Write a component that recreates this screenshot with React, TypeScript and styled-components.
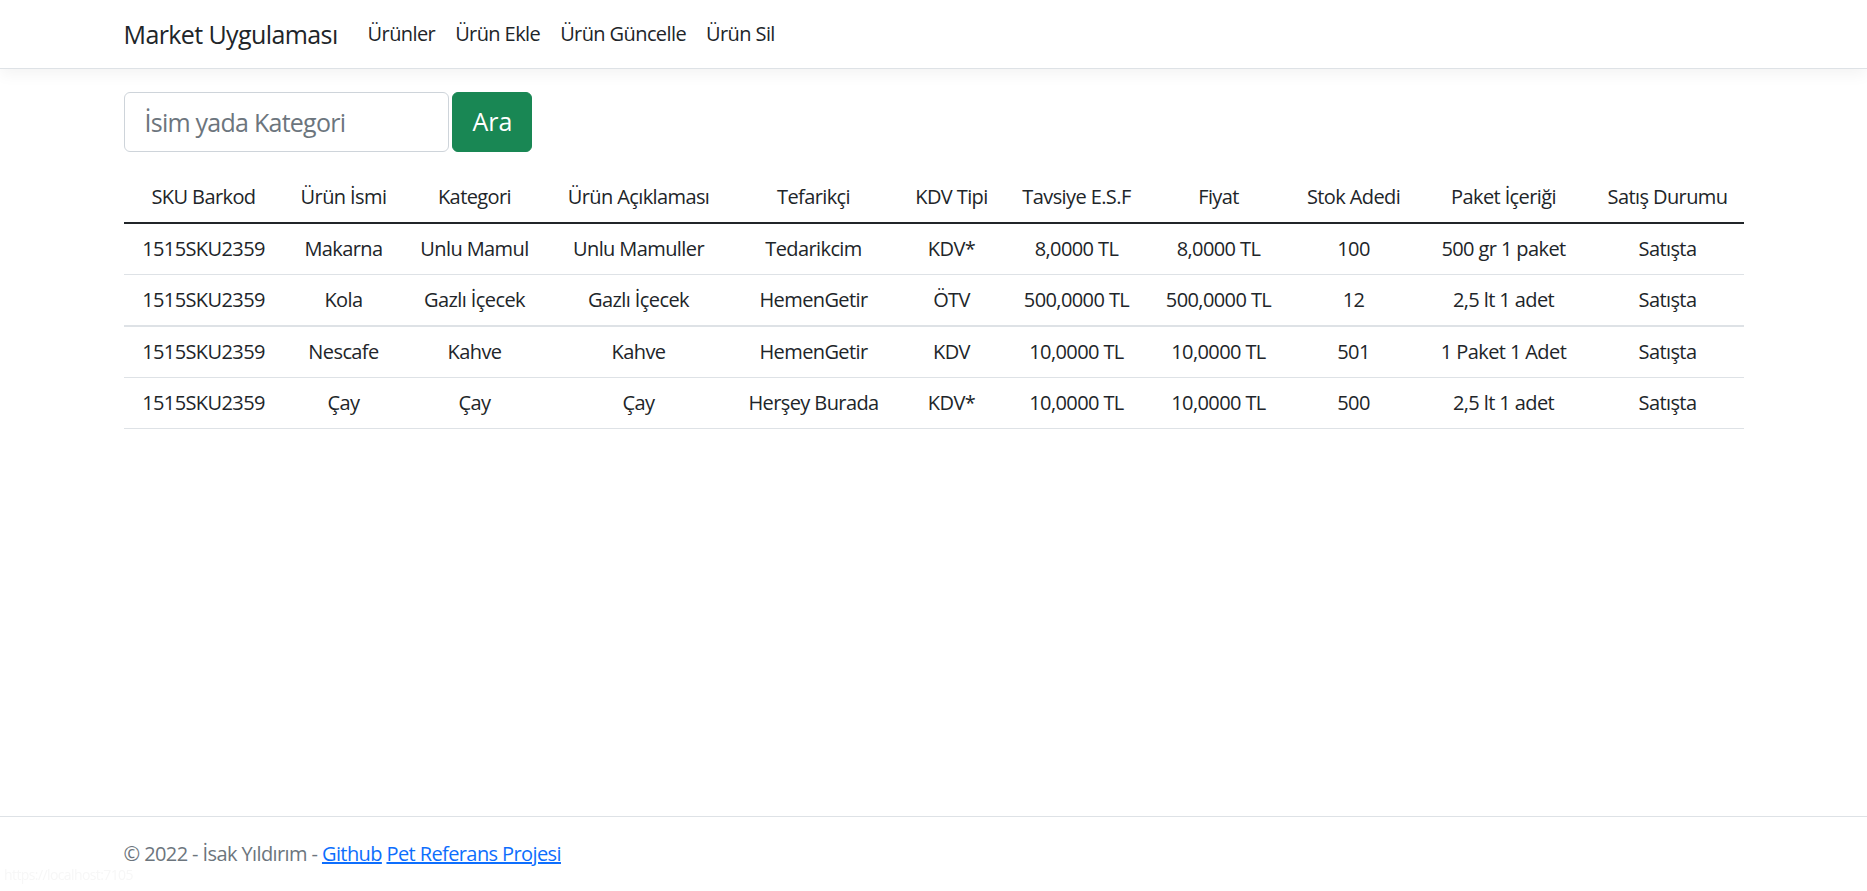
import styled, { createGlobalStyle } from "styled-components";

interface Product {
  sku: string;
  name: string;
  category: string;
  description: string;
  supplier: string;
  tax: string;
  suggested: string;
  price: string;
  stock: number;
  pack: string;
  status: string;
}

const GlobalStyle = createGlobalStyle`
  * {
    box-sizing: border-box;
  }
  html, body {
    margin: 0;
    padding: 0;
  }
  body {
    font-family: "Segoe UI", "Open Sans", "Noto Sans", sans-serif;
    font-size: 20px;
    line-height: 1.5;
    letter-spacing: -0.03em;
    color: #212529;
    background: #fff;
  }
`;

const Page = styled.div`
  min-height: 100vh;
  display: flex;
  flex-direction: column;
`;

const Container = styled.div`
  width: 100%;
  max-width: 1620px;
  margin: 0 auto;
`;

const Navbar = styled.nav`
  background: #fff;
  border-bottom: 1px solid #dee2e6;
  box-shadow: 0 5px 15px rgba(0, 0, 0, 0.05);
  padding: 9px 0;
  margin-bottom: 23px;
`;

const NavInner = styled(Container)`
  display: flex;
  align-items: center;
`;

const Brand = styled.a`
  font-size: 25px;
  line-height: 37px;
  padding: 6px 0;
  margin-right: 20px;
  color: #212529;
  text-decoration: none;
`;

const NavList = styled.ul`
  display: flex;
  list-style: none;
  margin: 0;
  padding: 0;
`;

const NavLink = styled.a`
  display: block;
  padding: 10px;
  color: #212529;
  text-decoration: none;
`;

const Main = styled(Container)`
  padding-bottom: 20px;
`;

const SearchForm = styled.form`
  display: flex;
  gap: 3px;
  margin-bottom: 20px;
`;

const SearchInput = styled.input`
  width: 325px;
  height: 60px;
  padding: 10px 20px;
  font: inherit;
  font-size: 25px;
  line-height: 37.5px;
  letter-spacing: -0.03em;
  color: #212529;
  border: 1px solid #ced4da;
  border-radius: 6px;
  outline: none;

  &::placeholder {
    color: #6c757d;
  }
`;

const SearchButton = styled.button`
  width: 80px;
  height: 60px;
  padding: 10px 20px;
  font: inherit;
  font-size: 25px;
  line-height: 37.5px;
  color: #fff;
  background: #198754;
  border: 1px solid #198754;
  border-radius: 6px;
`;

const Table = styled.table`
  width: 100%;
  border-collapse: collapse;
  table-layout: fixed;
`;

const HeadCell = styled.th`
  font-weight: 400;
  text-align: center;
  padding: 10px 4px;
  line-height: 30px;
  white-space: nowrap;
  border-bottom: 2px solid #212529;
`;

const Row = styled.tr<{ $thick?: boolean }>`
  border-bottom: ${(p) => (p.$thick ? "2px" : "1px")} solid #dee2e6;
`;

const Cell = styled.td`
  text-align: center;
  vertical-align: middle;
  padding: 10px 4px;
  line-height: 30px;
  white-space: nowrap;
`;

const Footer = styled.footer`
  margin-top: auto;
  border-top: 1px solid #dee2e6;
  line-height: 74px;
  color: #6c757d;
  white-space: nowrap;
`;

const FooterLink = styled.a`
  color: #0d6efd;
  text-decoration: underline;
`;

const StatusBubble = styled.div`
  position: fixed;
  left: 4px;
  bottom: 7px;
  font-size: 14px;
  line-height: 18px;
  color: #f7f7f7;
`;

const columns = [
  { title: "SKU Barkod", width: 160 },
  { title: "Ürün İsmi", width: 120 },
  { title: "Kategori", width: 142 },
  { title: "Ürün Açıklaması", width: 186 },
  { title: "Tefarikçi", width: 164 },
  { title: "KDV Tipi", width: 112 },
  { title: "Tavsiye E.S.F", width: 138 },
  { title: "Fiyat", width: 146 },
  { title: "Stok Adedi", width: 124 },
  { title: "Paket İçeriği", width: 176 },
  { title: "Satış Durumu", width: 152 },
];

const products: Product[] = [
  {
    sku: "1515SKU2359",
    name: "Makarna",
    category: "Unlu Mamul",
    description: "Unlu Mamuller",
    supplier: "Tedarikcim",
    tax: "KDV*",
    suggested: "8,0000 TL",
    price: "8,0000 TL",
    stock: 100,
    pack: "500 gr 1 paket",
    status: "Satışta",
  },
  {
    sku: "1515SKU2359",
    name: "Kola",
    category: "Gazlı İçecek",
    description: "Gazlı İçecek",
    supplier: "HemenGetir",
    tax: "ÖTV",
    suggested: "500,0000 TL",
    price: "500,0000 TL",
    stock: 12,
    pack: "2,5 lt 1 adet",
    status: "Satışta",
  },
  {
    sku: "1515SKU2359",
    name: "Nescafe",
    category: "Kahve",
    description: "Kahve",
    supplier: "HemenGetir",
    tax: "KDV",
    suggested: "10,0000 TL",
    price: "10,0000 TL",
    stock: 501,
    pack: "1 Paket 1 Adet",
    status: "Satışta",
  },
  {
    sku: "1515SKU2359",
    name: "Çay",
    category: "Çay",
    description: "Çay",
    supplier: "Herşey Burada",
    tax: "KDV*",
    suggested: "10,0000 TL",
    price: "10,0000 TL",
    stock: 500,
    pack: "2,5 lt 1 adet",
    status: "Satışta",
  },
];

export default function App() {
  return (
    <Page>
      <GlobalStyle />
      <header>
        <Navbar>
          <NavInner>
            <Brand href="#">Market Uygulaması</Brand>
            <NavList>
              <li><NavLink href="#">Ürünler</NavLink></li>
              <li><NavLink href="#">Ürün Ekle</NavLink></li>
              <li><NavLink href="#">Ürün Güncelle</NavLink></li>
              <li><NavLink href="#">Ürün Sil</NavLink></li>
            </NavList>
          </NavInner>
        </Navbar>
      </header>
      <Main>
        <SearchForm onSubmit={(e) => e.preventDefault()}>
          <SearchInput placeholder="İsim yada Kategori" />
          <SearchButton type="submit">Ara</SearchButton>
        </SearchForm>
        <Table>
          <colgroup>
            {columns.map((c) => (
              <col key={c.title} style={{ width: c.width }} />
            ))}
          </colgroup>
          <thead>
            <tr>
              {columns.map((c) => (
                <HeadCell key={c.title}>{c.title}</HeadCell>
              ))}
            </tr>
          </thead>
          <tbody>
            {products.map((p, i) => (
              <Row key={i} $thick={i === 1}>
                <Cell>{p.sku}</Cell>
                <Cell>{p.name}</Cell>
                <Cell>{p.category}</Cell>
                <Cell>{p.description}</Cell>
                <Cell>{p.supplier}</Cell>
                <Cell>{p.tax}</Cell>
                <Cell>{p.suggested}</Cell>
                <Cell>{p.price}</Cell>
                <Cell>{p.stock}</Cell>
                <Cell>{p.pack}</Cell>
                <Cell>{p.status}</Cell>
              </Row>
            ))}
          </tbody>
        </Table>
      </Main>
      <Footer>
        <Container>
          © 2022 - İsak Yıldırım - <FooterLink href="#">Github</FooterLink>{" "}
          <FooterLink href="#">Pet Referans Projesi</FooterLink>
        </Container>
      </Footer>
      <StatusBubble>https://localhost:7105</StatusBubble>
    </Page>
  );
}
